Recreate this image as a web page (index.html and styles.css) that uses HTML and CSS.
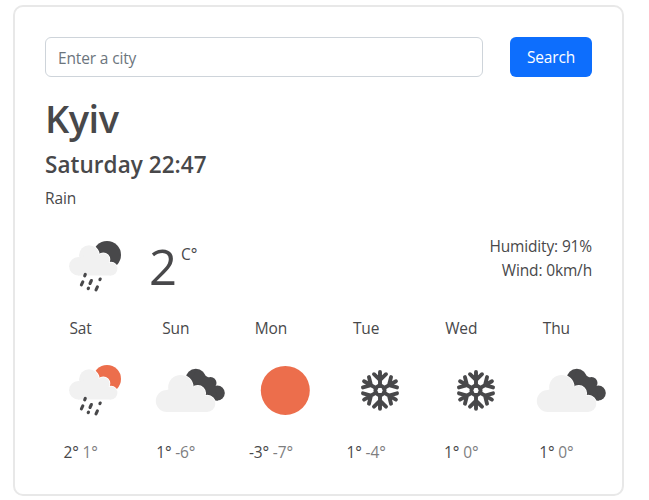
FILE: index.html
```html
<!DOCTYPE html>
<html lang="en">
<head>
<meta charset="utf-8">
<title>Weather</title>
<link rel="stylesheet" href="styles.css">
</head>
<body>
<svg class="defs" width="0" height="0" aria-hidden="true">
  <defs>
    <g id="rain-cloud">
      <g class="cloud-gap"><circle cx="44" cy="39.3" r="10"/><circle cx="58.3" cy="43.5" r="6.2"/><circle cx="66" cy="53" r="6.4"/></g>
      <g class="cloud"><circle cx="44" cy="39.3" r="10"/><circle cx="33.3" cy="50.3" r="9.2"/><circle cx="58.3" cy="43.5" r="6.2"/><circle cx="66" cy="53" r="6.4"/><path d="M33 43l11-6 14 4 8 8v10.4H33z"/></g>
      <path class="drops" d="M40.3 58.4l-.6 1.4M37.8 65.8l-1.4 3M46.4 64.5l-1.4 3M55.2 63l-.3.6M43.5 72.1l-.3.5M52.4 70.8l-1.4 3"/>
    </g>
    <g id="clouds">
      <g class="dark"><circle cx="55.8" cy="39" r="10.2"/><circle cx="70.5" cy="43" r="6"/><circle cx="77.3" cy="53" r="7.5"/><path d="M56 30l15 9 4 9 3 12.5H70L50 45z"/></g>
      <g class="cloud-gap"><circle cx="40.5" cy="47.3" r="12.3"/><circle cx="57.8" cy="53.3" r="7.5"/><circle cx="67.1" cy="63.8" r="8.2"/></g>
      <g class="cloud"><circle cx="40.5" cy="47.3" r="12.3"/><circle cx="26.8" cy="61" r="11"/><circle cx="57.8" cy="53.3" r="7.5"/><circle cx="67.1" cy="63.8" r="8.2"/><path d="M27 50l13-6 18 5 9 9v14H27z"/></g>
    </g>
    <g id="arm"><path d="M0-4.5V-18.4M-6-16.2L0-10.4 6-16.2"/></g>
    <g id="snow" class="snow" transform="translate(50 50.4)">
      <circle r="4.6"/>
      <use href="#arm"/><use href="#arm" transform="rotate(60)"/><use href="#arm" transform="rotate(120)"/><use href="#arm" transform="rotate(180)"/><use href="#arm" transform="rotate(240)"/><use href="#arm" transform="rotate(300)"/>
    </g>
  </defs>
</svg>
<main class="card">
  <form class="search">
    <input class="field" type="text" placeholder="Enter a city">
    <button class="button" type="button">Search</button>
  </form>
  <h1 class="city">Kyiv</h1>
  <h2 class="date">Saturday 22:47</h2>
  <div class="description">Rain</div>
  <section class="current">
    <svg class="icon" viewBox="0 0 100 100"><circle class="dark" cx="62" cy="39" r="14"/><use href="#rain-cloud"/></svg>
    <span class="temperature">2</span><span class="unit">C°</span>
    <div class="details"><div class="humidity">Humidity: 91%</div><div>Wind: 0km/h</div></div>
  </section>
  <section class="forecast">
    <div class="day"><div class="name">Sat</div><svg class="icon" viewBox="0 0 100 100"><circle class="sun" cx="62" cy="39" r="14"/><use href="#rain-cloud"/></svg><div class="range">2° <span class="low">1°</span></div></div>
    <div class="day"><div class="name">Sun</div><svg class="icon" viewBox="0 0 100 100"><use href="#clouds"/></svg><div class="range">1° <span class="low">-6°</span></div></div>
    <div class="day"><div class="name">Mon</div><svg class="icon" viewBox="0 0 100 100"><circle class="sun" cx="50.3" cy="50.4" r="24.5"/></svg><div class="range">-3° <span class="low">-7°</span></div></div>
    <div class="day"><div class="name">Tue</div><svg class="icon" viewBox="0 0 100 100"><use href="#snow"/></svg><div class="range">1° <span class="low">-4°</span></div></div>
    <div class="day"><div class="name">Wed</div><svg class="icon" viewBox="0 0 100 100"><use href="#snow"/></svg><div class="range">1° <span class="low">0°</span></div></div>
    <div class="day"><div class="name">Thu</div><svg class="icon" viewBox="0 0 100 100"><use href="#clouds"/></svg><div class="range">1° <span class="low">0°</span></div></div>
  </section>
</main>
</body>
</html>
```
FILE: styles.css
```css
* { box-sizing: border-box; }
body {
  margin: 0;
  padding: 5px 25px 4px 13px;
  background: #fff;
  color: #48484a;
  font: 15.5px/24px "Open Sans", "Noto Sans", sans-serif;
  letter-spacing: -0.15px;
}
.defs { position: absolute; }
.card {
  height: 491px;
  padding: 30px;
  border: 2px solid #e8e8e8;
  border-radius: 10px;
}
.search { display: flex; gap: 27px; height: 40px; margin: 0; }
.field {
  flex: 1;
  min-width: 0;
  padding: 1px 12px 0;
  border: 1px solid #ced4da;
  border-radius: 6px;
  font: inherit;
  letter-spacing: inherit;
}
.field::placeholder { color: #6c757d; opacity: 1; }
.button {
  width: 82px;
  padding: 0;
  border: 0;
  border-radius: 6px;
  background: #0d6efd;
  color: #fff;
  font: inherit;
  letter-spacing: inherit;
}
.city { margin: 17px 0 8px; font-size: 38px; line-height: 48px; font-weight: 600; letter-spacing: -0.5px; }
.date { margin: 0 0 7px; font-size: 22.5px; line-height: 29px; font-weight: 600; letter-spacing: 0.05px; }
.description { margin-bottom: 6px; }
.current { display: flex; align-items: flex-start; height: 100px; }
.icon { display: block; flex: none; width: 100px; height: 100px; }
.temperature { margin: 23px 0 0 4px; font-size: 49px; line-height: 54px; letter-spacing: 0; }
.unit { margin: 26px 0 0 4px; }
.details { margin: 18px 0 0 auto; text-align: right; }
.forecast { display: grid; grid-template-columns: repeat(6, minmax(0, 1fr)); gap: 24px; }
.name, .range { text-align: center; white-space: nowrap; }
.low { opacity: 0.7; }
.dark { fill: #48484a; }
.sun { fill: #ec6e4c; }
.cloud { fill: #f1f1f1; }
.cloud-gap { fill: #fff; stroke: #fff; stroke-width: 1.6; }
.drops { fill: none; stroke: #48484a; stroke-width: 3.1; stroke-linecap: round; }
.snow { fill: none; stroke: #48484a; stroke-width: 3.9; stroke-linecap: round; }
```
